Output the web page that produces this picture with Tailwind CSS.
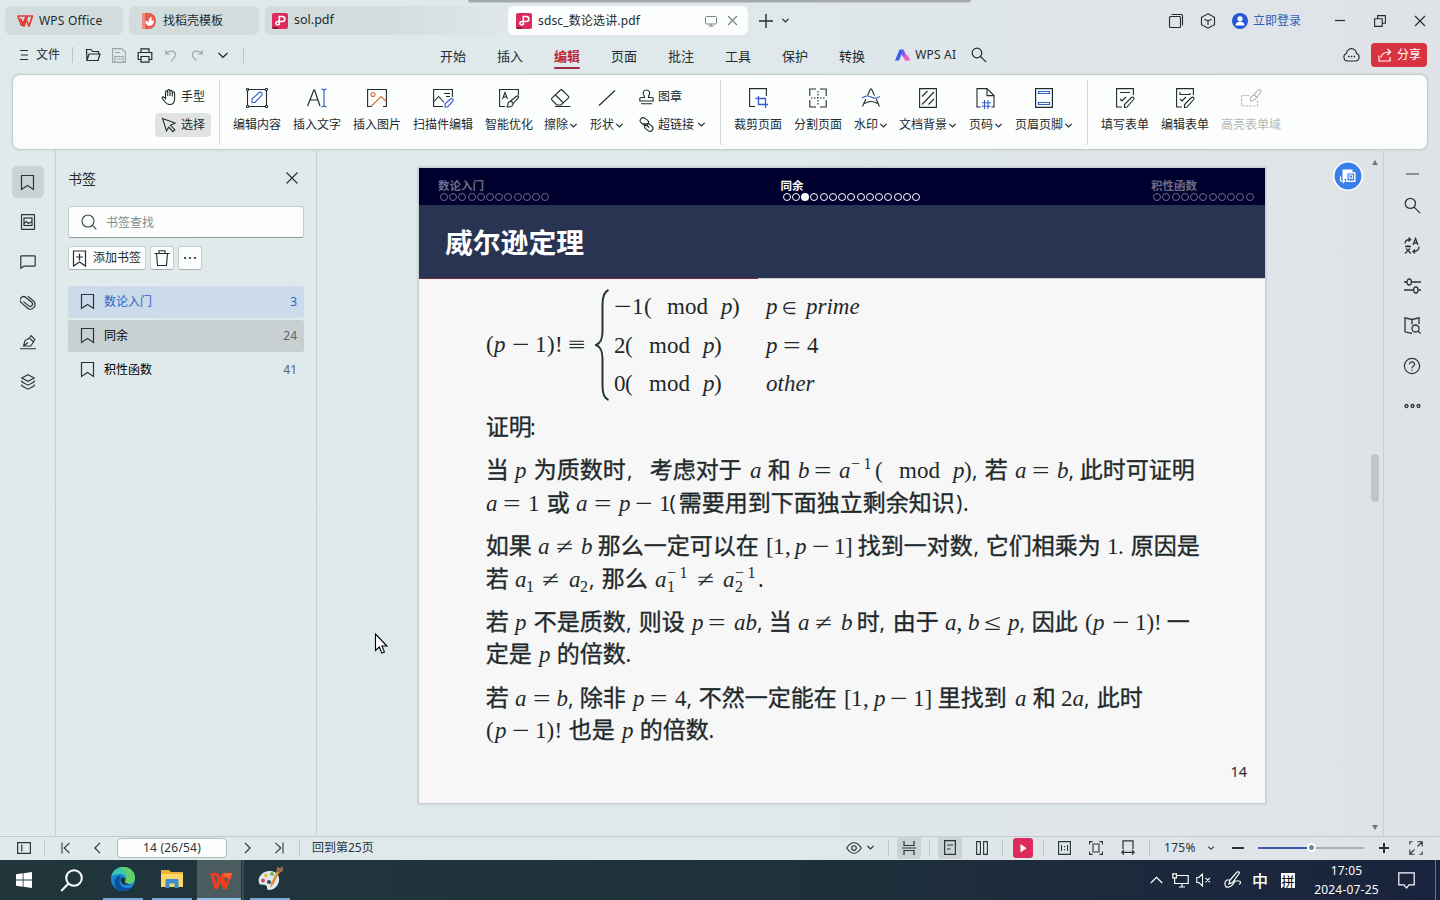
<!DOCTYPE html>
<html lang="zh-CN">
<head>
<meta charset="utf-8">
<title>sdsc_数论选讲.pdf - WPS Office</title>
<script src="https://cdn.jsdelivr.net/npm/@tailwindcss/browser@4"></script>
</head>
<body class="w-[1440px] h-[900px] overflow-hidden relative flex flex-col bg-linear-to-r from-[#dfeaeb] via-[#dfe8eb] to-[#dfe3e8] text-[12px] leading-none text-[#222b2f] font-['Noto_Sans','Noto_Sans_CJK_SC',sans-serif]">

<svg class="hidden">
  <symbol id="chev" viewBox="0 0 8 8"><path d="M1.2 2.6 4 5.3 6.8 2.6" fill="none" stroke="currentColor" stroke-width="1.100"/></symbol>
  <symbol id="mark" viewBox="0 0 16 18"><path d="M1.5 1.5h12v14L7.500 11.500 1.500 15.500z" fill="none" stroke="currentColor" stroke-width="1.2"/></symbol>
  <symbol id="pdf" viewBox="0 0 16 16"><rect width="16" height="16" rx="2" fill="#dc2c5e"/><path d="M0 14h6v2H2a2 2 0 0 1-2-2z" fill="#8e1738"/><path d="M7.300 12V3.500h3a2.500 2.500 0 0 1 0 5H5.800a1.700 1.700 0 1 0 1.500 1.700" fill="none" stroke="#fff" stroke-width="1.600"/></symbol>
  <symbol id="mag" viewBox="0 0 16 16"><g fill="none" stroke="currentColor" stroke-width="1.200"><circle cx="6" cy="6" r="4.800"/><path d="m9.500 9.500 5.700 5.700"/></g></symbol>
</svg>

<div class="absolute left-[468px] top-0 w-[503px] h-[3px] bg-[#a2a9ab] rounded-b-[3px] border-b border-[#c3c9cb]"></div>

<!-- window tabs -->
<header class="h-[41px] shrink-0 flex items-center pl-[5px] pr-[14px]">
  <div class="flex items-center w-[118px] h-[29px] rounded-[6px] bg-[#d3dcdd] pl-[12px] mr-[6px]">
    <svg class="w-[16px] h-[12px] mr-[6px]" viewBox="0 0 16 12"><path d="M0.500 1h10L7 11 3.500 3.500M5 11 8.500 3 12 11 15.500 1h-4M.7 1 4.800 11" fill="none" stroke="#e23b34" stroke-width="1.700"/></svg>
    <span class="text-[12px] tracking-[0.200px]">WPS Office</span>
  </div>
  <div class="flex items-center w-[130px] h-[29px] rounded-[6px] bg-[#d3dcdd] pl-[12px] mr-[6px]">
    <svg class="w-[16px] h-[16px] mr-[6px]" viewBox="0 0 16 16"><path d="M1 0h7a7 8 0 0 1 0 16H1z" fill="#e8584f"/><path d="M1 0h3v16H1z" fill="#ef8a80"/><path d="M8 13c-3-1-4-3-3.500-5.500C6 8 7 9 7.500 10 7.300 7 8.500 4.500 10.500 3.500c-.2 2 .2 3 .2 4.500 1-.6 1.500-.7 2.300-.6C13 10.500 11 12.800 8 13z" fill="#fff"/></svg>
    <span>找稻壳模板</span>
  </div>
  <div class="flex items-center w-[243px] h-[29px] rounded-[6px] bg-linear-to-r from-[#d3dcdd] via-[#d5dcdf] to-[#dfe7ea] pl-[7px]">
    <svg class="w-[16px] h-[16px] mr-[6px]"><use href="#pdf"/></svg>
    <span class="text-[12.500px]">sol.pdf</span>
  </div>
  <div class="flex items-center w-[240px] h-[29px] rounded-[6px] bg-[#fcfdfd] pl-[8px] pr-[10px]">
    <svg class="w-[16px] h-[16px] mr-[6px]"><use href="#pdf"/></svg>
    <span class="text-[12px] tracking-[0.150px]">sdsc_数论选讲.pdf</span>
    <svg class="ml-auto w-[12px] h-[12px] text-[#7b8386]" viewBox="0 0 12 12" fill="none" stroke="currentColor"><rect x=".5" y="1.500" width="11" height="7.500" rx="1"/><path d="M6 9v2M3.500 11h5"/></svg>
    <svg class="ml-[10px] w-[11px] h-[11px] text-[#7b8386]" viewBox="0 0 11 11" fill="none" stroke="currentColor" stroke-width="1.100"><path d="m1 1 9 9M10 1 1 10"/></svg>
  </div>
  <svg class="ml-[11px] w-[14px] h-[14px]" viewBox="0 0 14 14" stroke="currentColor" stroke-width="1.400"><path d="M7 0v14M0 7h14"/></svg>
  <svg class="ml-[8px] w-[9px] h-[9px]"><use href="#chev"/></svg>
  <svg class="ml-auto w-[16px] h-[16px]" viewBox="0 0 16 16" fill="none" stroke="currentColor" stroke-width="1.100"><rect x="1.500" y="3.500" width="11" height="11" rx="1"/><path d="M3.500 1.500h10a1 1 0 0 1 1 1v10"/></svg>
  <svg class="ml-[16px] w-[16px] h-[16px]" viewBox="0 0 16 16" fill="none" stroke="currentColor" stroke-width="1.100"><path d="M8 .8 14.500 4.300v7.400L8 15.200 1.500 11.700V4.300zM4.500 6.200 8 8l3.500-1.800M8 8v4"/></svg>
  <svg class="ml-[16px] w-[16px] h-[16px]" viewBox="0 0 16 16"><circle cx="8" cy="8" r="8" fill="#2557d6"/><circle cx="8" cy="5.800" r="2.600" fill="#fff"/><path d="M3.500 12.500a4.500 3.700 0 0 1 9 0z" fill="#fff"/></svg>
  <span class="ml-[5px] w-[49px] text-[#2f61b5]">立即登录</span>
  <svg class="ml-[32px] w-[12px] h-[12px]" viewBox="0 0 12 12" stroke="currentColor" stroke-width="1.200"><path d="M1 5.500h10"/></svg>
  <svg class="ml-[28px] w-[12px] h-[12px]" viewBox="0 0 12 12" fill="none" stroke="currentColor" stroke-width="1.100"><path d="M.6 3.800h7.600v7.600H.6zM3.600 3.500V.6h7.800v7.600H8.500"/></svg>
  <svg class="ml-[28px] w-[12px] h-[12px]" viewBox="0 0 12 12" stroke="currentColor" stroke-width="1.200"><path d="m1 1 10 10M11 1 1 11"/></svg>
</header>

<!-- menu row -->
<nav class="h-[34px] shrink-0 flex items-center pl-[19px] pr-[13px] pb-[6px]">
  <svg class="w-[10px] h-[12px]" viewBox="0 0 10 12" stroke="currentColor" stroke-width="1.100"><path d="M1 1.500h8M2 6h7M1 10.500h8"/></svg>
  <span class="ml-[7px] w-[24px]">文件</span>
  <i class="ml-[12px] w-px h-[16px] bg-[#bcc6c8]"></i>
  <svg class="ml-[12px] w-[16px] h-[14px]" viewBox="0 0 16 14" fill="none" stroke="currentColor" stroke-width="1.200"><path d="M2 12.500 1.500 1.500H6l1.500 2h6V6M2 12.500 4 6h11l-2 6.500z"/></svg>
  <svg class="ml-[11px] w-[14px] h-[15px] text-[#9ba5a8]" viewBox="0 0 14 15" fill="none" stroke="currentColor" stroke-width="1.100"><path d="M.6.6h9L13.400 4v10.400H.6zM3 4.500h5M3 14V8.500h8V14M5 11h4"/></svg>
  <svg class="ml-[11px] w-[16px] h-[15px]" viewBox="0 0 16 15" fill="none" stroke="currentColor" stroke-width="1.200"><path d="M4 4.500V.8h8v3.700M4 11.500H1.200v-7h13.600v7H12M4 8.500h8v5.700H4z"/></svg>
  <svg class="ml-[12px] w-[12px] h-[13px] text-[#9ba5a8]" viewBox="0 0 12 13" fill="none" stroke="currentColor" stroke-width="1.200"><path d="M1 1v4h4M1.300 4.700C4 .8 10.500 1.500 10.500 5.500c0 3-3 4.500-4.500 7"/></svg>
  <svg class="ml-[14px] w-[12px] h-[13px] text-[#9ba5a8]" viewBox="0 0 12 13" fill="none" stroke="currentColor" stroke-width="1.200"><path d="M11 1v4H7M10.700 4.700C8 .8 1.500 1.500 1.500 5.500c0 3 2 4.500 4 6"/></svg>
  <svg class="ml-[14px] w-[12px] h-[12px]" viewBox="0 0 12 12"><path d="M1.500 4 6 8.300 10.500 4" fill="none" stroke="currentColor" stroke-width="1.200"/></svg>
  <i class="ml-[14px] w-px h-[16px] bg-[#bcc6c8]"></i>
  <div class="ml-[196px] flex gap-[31px] text-[13px] items-center h-[26px] pt-[2px]">
    <span>开始</span><span>插入</span>
    <span class="relative font-bold text-[#bd2536]">编辑<i class="absolute left-0 top-[17px] w-[26px] h-[2px] rounded bg-[#a02c3e]"></i></span>
    <span>页面</span><span>批注</span><span>工具</span><span>保护</span><span>转换</span>
  </div>
  <svg class="ml-[30px] w-[16px] h-[12px]" viewBox="0 0 16 12"><path d="M0 11.500 4.500.5h4L4 11.500z" fill="#3c5ff0"/><path d="M8.500.5 12 8l-3 1-3-4z" fill="#8a55f0"/><path d="M9.500 6h3l3 5.500h-6z" fill="#f45fc3"/></svg>
  <span class="ml-[4px] w-[44px] text-[12px] whitespace-nowrap tracking-[0.200px]">WPS AI</span>
  <svg class="ml-[12px] w-[16px] h-[16px]"><use href="#mag"/></svg>
  <svg class="ml-auto w-[17px] h-[14px]" viewBox="0 0 17 14" fill="none" stroke="currentColor" stroke-width="1.100"><path d="M4.500 13a3.800 3.800 0 0 1-1-7.400 5 5 0 0 1 10 0 3.800 3.800 0 0 1-1 7.400z"/><path d="M5 8.500h1.500M7.800 8.500h1.500M10.600 8.500h1.500" stroke-width="1.600"/></svg>
  <div class="ml-[11px] w-[56px] h-[24px] rounded-[4px] bg-[#d93240] text-white flex items-center pl-[7px]">
    <svg class="w-[14px] h-[14px] mr-[5px]" viewBox="0 0 14 14" fill="none" stroke="currentColor" stroke-width="1.200"><path d="M1 7.500v5.500h11V9M3 9.500C3.500 6 6 4 12 4M9.500 1 12.500 4l-3 3"/></svg>分享
  </div>
</nav>

<!-- ribbon -->
<section class="mx-[13px] h-[74px] mb-px shrink-0 rounded-[7px] bg-[#fcfdfd] shadow-[0_0_2px_1px_#bcc4c6] flex items-center pb-[5px] text-[12px]">
  <div class="ml-[142px] mt-[2px] w-[56px] flex flex-col gap-[4px]">
    <div class="h-[24px] flex items-center pl-[6px]">
      <svg class="w-[16px] h-[16px] mr-[4px]" viewBox="0 0 16 16" fill="none" stroke="currentColor" stroke-width="1.100"><path d="M4.500 9.500V3a1.100 1.100 0 0 1 2.200 0V1.800a1.100 1.100 0 0 1 2.300 0V2.500a1.100 1.100 0 0 1 2.300 0V4a1.100 1.100 0 0 1 2.300 0v6c0 3.500-2 5.500-5 5.500-2.500 0-3.500-1-4.500-2.500L1.300 9.500c-.8-1.200.8-2.200 1.700-1.200zM6.700 3v4M9 2.500V7M11.300 4v3.500"/></svg>手型</div>
    <div class="h-[24px] flex items-center pl-[6px] rounded-[4px] bg-[#e1e3e3]">
      <svg class="w-[16px] h-[16px] mr-[4px]" viewBox="0 0 16 16" fill="none" stroke="currentColor" stroke-width="1.100"><path d="M1.500 1.500 14 6 9.500 8.300l4.300 4.400-1.900 1.900-4.200-4.400L5.500 14z"/></svg>选择</div>
  </div>
  <i class="ml-[8px] mr-[7px] mt-[5px] w-px h-[65px] bg-[#d5d9da]"></i>

  <div class="w-[60px] flex flex-col items-center gap-[11px] whitespace-nowrap">
    <svg class="w-[22px] h-[20px]" viewBox="0 0 22 20" fill="none" stroke="currentColor" stroke-width="1.100"><path d="M3 1.500h16M3 18.500h16M1.500 3v14M20.500 3v14"/><g fill="#fff"><circle cx="1.600" cy="1.600" r="1.100"/><circle cx="20.400" cy="1.600" r="1.100"/><circle cx="1.600" cy="18.400" r="1.100"/><circle cx="20.400" cy="18.400" r="1.100"/></g><path d="M6 14.500V11l7-6.500q1.500-1 2.700.3 1.100 1.300 0 2.700L9 14.500z" stroke="#3360c5"/></svg><span>编辑内容</span></div>
  <div class="w-[60px] flex flex-col items-center gap-[11px] whitespace-nowrap">
    <svg class="w-[20px] h-[20px]" viewBox="0 0 20 20" fill="none" stroke="currentColor" stroke-width="1.200"><path d="M.6 18 6.800 2h.8l5.400 16M2.700 12h8.300"/><path d="M14.500 1.200q2.500 0 2.500 1.500v14.500q0 1.500-2.500 1.500M19.500 1.200Q17 1.200 17 2.700v14.500q0 1.500 2.500 1.500" stroke="#3360c5"/></svg><span>插入文字</span></div>
  <div class="w-[60px] flex flex-col items-center gap-[11px] whitespace-nowrap">
    <svg class="w-[20px] h-[20px]" viewBox="0 0 20 20" fill="none" stroke="currentColor" stroke-width="1.100"><path d="M5 18.500H.6V1.500h18.800v17H16"/><g stroke="#d5703c"><circle cx="6" cy="6.500" r="2"/><path d="M4 18.500 14 8.500l5.400 5"/></g></svg><span>插入图片</span></div>
  <div class="w-[72px] flex flex-col items-center gap-[11px] whitespace-nowrap">
    <svg class="w-[22px] h-[20px]" viewBox="0 0 22 20" fill="none" stroke="currentColor" stroke-width="1.100"><path d="M11 18.500H1.600V1.500h18.800V9M12 5.500h6M14 8.500h4M1.600 14l5-5.500 5.500 6"/><path d="M13 19v-3l5.500-5q1.200-.8 2.200.2.900 1 0 2.300L15.500 19z" stroke="#3360c5"/></svg><span>扫描件编辑</span></div>
  <div class="w-[60px] flex flex-col items-center gap-[11px] whitespace-nowrap">
    <svg class="w-[22px] h-[20px]" viewBox="0 0 22 20" fill="none" stroke="currentColor" stroke-width="1.100"><path d="M7 18.500H1.600V1.500h18.800V7M4.500 11 7 4.500 9.500 11M5.300 9h3.500"/><path d="M9 18.800q1-1.300 1-2.600a2.500 2.500 0 1 1 4.300 1.500q-1.800 1.800-5.300 1.100zM12 13.500l6.500-5.300q1.500-.8 2 .3.200.8-.3 1.300L14.800 16"/></svg><span>智能优化</span></div>
  <div class="w-[44px] flex flex-col items-center gap-[11px] whitespace-nowrap">
    <svg class="w-[20px] h-[20px]" viewBox="0 0 20 20" fill="none" stroke="currentColor" stroke-width="1.100"><path d="M6 17 .9 11.900q-.8-.9 0-1.700L9.500 2q.8-.7 1.700 0l6.300 6.300q.7.800 0 1.600L10 17zM4.500 7l8 8M4 18.500h15.500" /></svg><span class="flex items-center">擦除<svg class="w-[9px] h-[9px] ml-[1px]"><use href="#chev"/></svg></span></div>
  <div class="w-[48px] flex flex-col items-center gap-[11px] whitespace-nowrap">
    <svg class="w-[18px] h-[20px]" viewBox="0 0 18 20" fill="none" stroke="currentColor" stroke-width="1.200"><path d="M1 17.500 17 2.500"/></svg><span class="flex items-center">形状<svg class="w-[9px] h-[9px] ml-[1px]"><use href="#chev"/></svg></span></div>
  <div class="ml-[8px] mt-[2px] w-[68px] flex flex-col gap-[12px] whitespace-nowrap">
    <div class="flex items-center h-[16px]"><svg class="w-[15px] h-[16px] mr-[4px]" viewBox="0 0 15 16" fill="none" stroke="currentColor" stroke-width="1.100"><path d="M5.500 8.500q.3-1.500-1-2.700a3.300 3.300 0 1 1 5.900-.1q-1.200 1.300-.9 2.800h3.700q1 0 1 1.200V12H.8V9.700q0-1.200 1-1.200zM2 14.800h11"/></svg>图章</div>
    <div class="flex items-center h-[16px]"><svg class="w-[15px] h-[16px] mr-[4px]" viewBox="0 0 15 16" fill="none" stroke="currentColor" stroke-width="1.100"><rect x=".9" y="1.600" width="9" height="6" rx="3" transform="rotate(38 5.400 4.600)"/><rect x="5.200" y="7.400" width="9" height="6" rx="3" transform="rotate(38 9.700 10.400)"/><path d="m4.500 6 5.800 4.500"/></svg>超链接<svg class="w-[9px] h-[9px] ml-[3px]"><use href="#chev"/></svg></div>
  </div>
  <i class="ml-[13px] mr-[7px] mt-[5px] w-px h-[65px] bg-[#d5d9da]"></i>

  <div class="w-[60px] flex flex-col items-center gap-[11px] whitespace-nowrap">
    <svg class="w-[20px] h-[20px]" viewBox="0 0 20 20" fill="none" stroke="currentColor" stroke-width="1.100"><path d="M7 18.500H1.600V.6h16.800V8"/><path d="M10.500 8v8.500H20M7.500 10.500h10v9.500" stroke="#3360c5" stroke-width="1.300"/></svg><span>裁剪页面</span></div>
  <div class="w-[60px] flex flex-col items-center gap-[11px] whitespace-nowrap">
    <svg class="w-[18px] h-[20px]" viewBox="0 0 18 20" fill="none" stroke="currentColor" stroke-width="1.100"><path d="M7 1H.8v7M11 1h6.200v7M7 19H.8v-7M11 19h6.200v-7"/><path d="M9 3v15M2 10h15" stroke-dasharray="1.500 1.500"/></svg><span>分割页面</span></div>
  <div class="w-[46px] flex flex-col items-center gap-[11px] whitespace-nowrap">
    <svg class="w-[20px] h-[20px]" viewBox="0 0 20 20" fill="none" stroke="currentColor" stroke-width="1.100"><path d="M6.500 7.500 9.500 1h1l3 6.500M4.800 11 1.500 18.500M15.200 11l3.300 7.500M3.500 15.500q6.500-4 13 0"/><path d="M1 10Q5.500 6.500 10 9t9-.500" stroke="#3360c5"/></svg><span class="flex items-center">水印<svg class="w-[9px] h-[9px] ml-[1px]"><use href="#chev"/></svg></span></div>
  <div class="w-[68px] flex flex-col items-center gap-[11px] whitespace-nowrap">
    <svg class="w-[18px] h-[20px]" viewBox="0 0 18 20" fill="none" stroke="currentColor" stroke-width="1.100"><path d="M.6.6h16.800v18.800H.6zM3 8.500 8.500 3M3 16.500 15 4M9.500 16.500 15 11"/></svg><span class="flex items-center">文档背景<svg class="w-[9px] h-[9px] ml-[1px]"><use href="#chev"/></svg></span></div>
  <div class="w-[48px] flex flex-col items-center gap-[11px] whitespace-nowrap">
    <svg class="w-[20px] h-[22px] -my-px" viewBox="0 0 20 22" fill="none" stroke="currentColor" stroke-width="1.100"><path d="M4.500 20H1V1.600h10l7 7V20h-2.500M11 1.600v7h7"/><path d="M8.500 13v9M12 13v9M6 15.700h9M5.500 19.300h9" stroke="#3360c5"/></svg><span class="flex items-center">页码<svg class="w-[9px] h-[9px] ml-[1px]"><use href="#chev"/></svg></span></div>
  <div class="w-[68px] flex flex-col items-center gap-[11px] whitespace-nowrap">
    <svg class="w-[18px] h-[20px]" viewBox="0 0 18 20" fill="none" stroke="currentColor" stroke-width="1.200"><path d="M.6.6h16.800v18.800H.6z"/><path d="M3.500 3.500h11v2h-11zM3.500 14.500h11v2h-11z" stroke="#3360c5"/></svg><span class="flex items-center">页眉页脚<svg class="w-[9px] h-[9px] ml-[1px]"><use href="#chev"/></svg></span></div>
  <i class="ml-[9px] mr-[7px] mt-[5px] w-px h-[65px] bg-[#d5d9da]"></i>
  <div class="w-[60px] flex flex-col items-center gap-[11px] whitespace-nowrap">
    <svg class="w-[20px] h-[20px]" viewBox="0 0 20 20" fill="none" stroke="currentColor" stroke-width="1.100"><path d="M7 19H1.600V.6h16.800V7M5 4.500h10M5 11l2 2 4-4"/><path d="M9.500 19.500v-3l7-7q1.200-.8 2.100 0 .8 1 0 2L12 19z"/></svg><span>填写表单</span></div>
  <div class="w-[60px] flex flex-col items-center gap-[11px] whitespace-nowrap">
    <svg class="w-[20px] h-[20px]" viewBox="0 0 20 20" fill="none" stroke="currentColor" stroke-width="1.100"><path d="M7 19H1.600V.6h16.800V7M5 4v2.500h10V5M5 11l2 2 4-4"/><path d="M9.500 19.500v-3l7-7q1.200-.8 2.100 0 .8 1 0 2L12 19z"/></svg><span>编辑表单</span></div>
  <div class="w-[72px] flex flex-col items-center gap-[11px] whitespace-nowrap text-[#b4b8b9]">
    <svg class="w-[22px] h-[20px]" viewBox="0 0 22 20" fill="none" stroke="currentColor" stroke-width="1.100"><path d="M9 7.500H1.500V18h16v-6" stroke-dasharray="2.500 1.200"/><path d="M10.500 13v-3.500l3.500-3L18 2q1.500-1 2.500 0t0 2.300L17 9.500l-3.500 3zM14 6.500 17 9.500"/></svg><span>高亮表单域</span></div>
</section>

<!-- body -->
<main class="flex-1 min-h-0 flex">
  <aside class="w-[56px] border-r border-[#c5d0d1] flex flex-col items-center pt-[16px] gap-[8px] text-[#2b3538]">
    <div class="size-[32px] rounded-[5px] bg-[#c9d3d4] flex items-center justify-center"><svg class="w-[16px] h-[18px] ml-px mt-px"><use href="#mark"/></svg></div>
    <div class="size-[32px] flex items-center justify-center"><svg class="w-[16px] h-[16px]" viewBox="0 0 16 16" fill="none" stroke="currentColor" stroke-width="1.200"><rect x="1.500" y=".6" width="13" height="14.800" rx=".5"/><rect x="4" y="4" width="8" height="7.500"/><path d="m4 9.500 2.500-2 2 2L12 7.500"/></svg></div>
    <div class="size-[32px] flex items-center justify-center"><svg class="w-[16px] h-[14px]" viewBox="0 0 16 14" fill="none" stroke="currentColor" stroke-width="1.200"><path d="M.8 13.200V1.600q0-.8.8-.8h12.800q.8 0 .8.800v8.800q0 .8-.8.800H4z"/></svg></div>
    <div class="size-[32px] flex items-center justify-center"><svg class="w-[16px] h-[16px]" viewBox="0 0 16 16" fill="none" stroke="currentColor" stroke-width="1.200"><g transform="rotate(-50 8 8)"><path d="M5.500 4v7a2.300 2.300 0 0 0 4.600 0V3.500a3.500 3.500 0 0 0-7 0V11.500a4.600 4.600 0 0 0 9.200 0V4"/></g></svg></div>
    <div class="size-[32px] flex items-center justify-center"><svg class="w-[16px] h-[16px]" viewBox="0 0 16 16" fill="none" stroke="currentColor" stroke-width="1.100"><path d="M0 14.700h16M3.500 12 5 6.500 9.500 4l4 4-2.800 4zM9 4.500l2-3 4 4-2 2.300M3.500 12 8 8.500"/></svg></div>
    <div class="size-[32px] flex items-center justify-center"><svg class="w-[16px] h-[16px]" viewBox="0 0 16 16" fill="none" stroke="currentColor" stroke-width="1.100"><path d="M8 .7 14.300 4 8 7.300 1.700 4zM1.700 6.500v1.300L8 11.200l6.300-3.400V6.500M1.700 10.500v1.300L8 15.200l6.300-3.400v-1.300"/></svg></div>
  </aside>

  <aside class="w-[261px] border-r border-[#c5d0d1] px-[12px] flex flex-col">
    <div class="h-[56px] flex items-center justify-between pr-[6px]"><span class="text-[14px] pt-[2px]">书签</span>
      <svg class="w-[12px] h-[12px]" viewBox="0 0 12 12" stroke="currentColor" stroke-width="1.100"><path d="m.5.5 11 11M11.500.5l-11 11"/></svg></div>
    <div class="w-[236px] h-[32px] rounded-[3px] bg-[#fcfdfd] border border-[#c3cbcd] border-b-[#8f999b] flex items-center pl-[12px] text-[#848b8d]"><svg class="w-[16px] h-[16px] mr-[9px] text-[#3b4548]" viewBox="0 0 16 16" fill="none" stroke="currentColor" stroke-width="1.100"><circle cx="7" cy="7" r="6"/><path d="m11.300 11.300 4 4"/></svg><span class="pt-px">书签查找</span></div>
    <div class="flex gap-[4px] mt-[8px]">
      <div class="w-[78px] h-[24px] rounded-[3px] bg-[#fcfdfd] border border-[#c7cfd0] border-b-[#a5adaf] flex items-center pl-[3px] whitespace-nowrap"><svg class="w-[15px] h-[17px] mr-[6px]" viewBox="0 0 15 17" fill="none" stroke="currentColor" stroke-width="1.200"><path d="M1.500 1h12v15l-6-4-6 4zM4 7h7M7.500 3.500v7"/></svg>添加书签</div>
      <div class="w-[24px] h-[24px] rounded-[3px] bg-[#fcfdfd] border border-[#c7cfd0] border-b-[#a5adaf] flex items-center justify-center"><svg class="w-[16px] h-[16px]" viewBox="0 0 16 16" fill="none" stroke="currentColor" stroke-width="1.100"><path d="M.5 3.500h15M5 3.500V.8h6v2.700M2.500 3.500l1 12h9l1-12"/></svg></div>
      <div class="w-[24px] h-[24px] rounded-[3px] bg-[#fcfdfd] border border-[#c7cfd0] border-b-[#a5adaf] flex items-center justify-center"><svg class="w-[14px] h-[4px]" viewBox="0 0 14 4" fill="currentColor"><circle cx="2" cy="2" r="1.100"/><circle cx="7" cy="2" r="1.100"/><circle cx="12" cy="2" r="1.100"/></svg></div>
    </div>
    <div class="mt-[16px] flex flex-col gap-[2px] w-[236px]">
      <div class="h-[32px] rounded-[4px] bg-[#cbdbea] flex items-center pl-[12px] pr-[7px] text-[#2f66c4]"><svg class="w-[16px] h-[18px] mr-[8px] text-[#2b3538]"><use href="#mark"/></svg>数论入门<span class="ml-auto">3</span></div>
      <div class="h-[32px] rounded-[3px] bg-[#c8d0d2] flex items-center pl-[12px] pr-[7px] text-black"><svg class="w-[16px] h-[18px] mr-[8px] text-[#2b3538]"><use href="#mark"/></svg>同余<span class="ml-auto text-[#5b6467]">24</span></div>
      <div class="h-[32px] flex items-center pl-[12px] pr-[7px] text-black"><svg class="w-[16px] h-[18px] mr-[8px] text-[#2b3538]"><use href="#mark"/></svg>积性函数<span class="ml-auto text-[#5b6467]">41</span></div>
    </div>
  </aside>

  <section class="flex-1 relative pl-[102px] pt-[18px]">
    <article class="w-[846px] h-[635px] bg-[#f7f7f7] shadow-[0_0_2px_1px_#b9c2c7] flex flex-col">
      <div class="h-[37px] bg-[#00002e] flex justify-between pl-[19px] pr-[11px] pt-[12px] text-[11.500px] font-bold font-['Noto_Sans_CJK_SC',sans-serif]">
        <div class="w-[112px] text-[#6c6c86]"><p>数论入门</p><div data-dots="12" class="flex gap-[1.200px] pl-[2px] mt-[1.500px]"></div></div>
        <div class="w-[140px] text-white"><p>同余</p><div data-dots="15" data-on="2" class="flex gap-[1.250px] pl-[2px] mt-[1.500px]"></div></div>
        <div class="w-[103px] text-[#6c6c86]"><p>积性函数</p><div data-dots="11" class="flex gap-[1.250px] pl-[2px] mt-[1.500px]"></div></div>
      </div>
      <div class="h-[73px] shrink-0 bg-[#293352] text-white text-[27.800px] font-bold font-['Noto_Sans_CJK_SC',sans-serif] pl-[26px] flex items-center">威尔逊定理</div>
      <div class="h-px bg-[#c9c9d0] shrink-0"><div class="w-[339px] h-px bg-[#7e2b3f]"></div></div>
      <div class="flex h-[116px] shrink-0 pl-[66px] pt-[8px]">
        <div class="w-[110px] pt-[42px]" data-line="eq0"></div>
        <svg class="w-[15px] h-[114px] mt-px" viewBox="0 0 15 114"><path d="M13.500 2C9 4 7.500 8 7.500 16v27c0 8-1.500 12-6.500 14 5 2 6.500 6 6.500 14v27c0 8 1.500 12 6 14" fill="none" stroke="#23373b" stroke-width="2"/></svg>
        <div class="w-[300px] flex flex-col gap-[6.500px] pl-[3px] pt-[4px]"><div data-line="eq1"></div><div data-line="eq2"></div><div data-line="eq3"></div></div>
      </div>
      <div class="pl-[66px] pt-[14px] flex flex-col gap-[11px]">
        <div data-line="t0"></div>
        <div class="flex flex-col gap-px"><div data-line="t1"></div><div data-line="t2"></div></div>
        <div class="flex flex-col gap-px"><div data-line="t3"></div><div data-line="t4"></div></div>
        <div class="flex flex-col"><div data-line="t5"></div><div data-line="t6"></div></div>
        <div class="flex flex-col pt-px"><div data-line="t7"></div><div data-line="t8"></div></div>
      </div>
      <div class="mt-auto mb-[25px] pr-[18px] text-right text-[14.500px]">14</div>
    </article>
    <svg class="absolute left-[1016px] top-[11px] w-[30px] h-[30px]" viewBox="0 0 30 30"><circle cx="15" cy="15" r="14.200" fill="#3a7fe8" stroke="#fff" stroke-width="1.500"/><path d="M9.500 8.500h10v3.500h-6v6h-4z" fill="#fff"/><rect x="13.800" y="11.800" width="8" height="8.500" fill="#3a7fe8" stroke="#fff" stroke-width="1.400"/><path d="M16.200 14v4l1.600-1.300 1.600 1.300V14z" fill="none" stroke="#fff"/><path d="M7.500 15.500v4.500h4M9.800 18l2 2-2 2" fill="none" stroke="#fff" stroke-width="1.200"/></svg>
    <i class="absolute left-[1055px] top-[10px] border-x-[3px] border-x-transparent border-b-[5px] border-b-[#6f777b]"></i>
    <i class="absolute left-[1055px] bottom-[6px] border-x-[3px] border-x-transparent border-t-[5px] border-t-[#6f777b]"></i>
    <i class="absolute left-[1054px] top-[304px] w-[8px] h-[48px] rounded-[4px] bg-[#c0c5c9]"></i>
    <svg class="absolute left-[57px] top-[483px] w-[14px] h-[22px]" viewBox="0 0 14 22"><path d="M1.500 1v16.500l3.800-3.500 2.500 6 2.600-1.100-2.500-5.900h5z" fill="#fff" stroke="#000" stroke-width="1.100"/></svg>
  </section>

  <aside class="w-[57px] border-l border-[#c8ced3] flex flex-col items-center text-[#2b3538]">
    <i class="mt-[23px] w-[13px] h-[2px] bg-[#8c9296]"></i>
    <svg class="mt-[22px] w-[17px] h-[17px]"><use href="#mag"/></svg>
    <svg class="mt-[23px] w-[16px] h-[18px]" viewBox="0 0 16 18" fill="none" stroke="currentColor" stroke-width="1.300"><path d="M1 6.500C1 3.500 3 2.500 6.500 2.500M4.500.5l2.200 2-2.200 2M9 8l2.500-6.500L14 8M9.800 6h3.500M1 9.500h6M4 8v1.500M2 11.500l5 5M6 11.500l-5 5M15 9.500c0 3.500-2 5-5.500 5M11 12.500l-2 2 2 2"/></svg>
    <svg class="mt-[23px] w-[17px] h-[16px]" viewBox="0 0 17 16" fill="none" stroke="currentColor" stroke-width="1.300"><path d="M0 4h3M7.500 4H17M0 12h9.500M14 12h3"/><ellipse cx="5.200" cy="4" rx="2.200" ry="3"/><ellipse cx="11.800" cy="12" rx="2.200" ry="3"/></svg>
    <svg class="mt-[23px] w-[17px] h-[17px]" viewBox="0 0 17 17" fill="none" stroke="currentColor" stroke-width="1.300"><path d="M8 2.500 1 .8v14L8 16.500M8 2.500l7-1.700V7M8 2.500v5"/><circle cx="11.500" cy="11.500" r="3.500"/><path d="m14 14 2.500 2.500"/></svg>
    <svg class="mt-[23px] w-[18px] h-[18px]" viewBox="0 0 18 18" fill="none" stroke="currentColor" stroke-width="1.200"><circle cx="9" cy="9" r="7.600"/><path d="M6.500 7.200a2.500 2.300 0 1 1 3.700 2Q9 9.800 9 11.200M9 12.600v1.200"/></svg>
    <svg class="mt-[28px] w-[17px] h-[6px]" viewBox="0 0 17 6" fill="none" stroke="currentColor" stroke-width="1.300"><circle cx="2.500" cy="3" r="1.500"/><circle cx="8.500" cy="3" r="1.500"/><circle cx="14.500" cy="3" r="1.500"/></svg>
  </aside>
</main>

<!-- status bar -->
<footer class="h-[24px] shrink-0 border-t border-[#c0cacb] flex items-center pb-[2px] text-[#2b3538]">
  <svg class="ml-[17px] w-[14px] h-[12px]" viewBox="0 0 14 12" fill="none" stroke="currentColor" stroke-width="1.200"><path d="M.6.6h12.800v10.800H.6zM4.800 2.500v7"/></svg>
  <i class="ml-[13px] w-px h-[14px] bg-[#bcc6c8]"></i>
  <svg class="ml-[16px] w-[9px] h-[12px]" viewBox="0 0 9 12" fill="none" stroke="currentColor" stroke-width="1.100"><path d="M1 .5v11M8.500.8 3.200 6l5.300 5.200"/></svg>
  <svg class="ml-[24px] w-[7px] h-[12px]" viewBox="0 0 7 12" fill="none" stroke="currentColor" stroke-width="1.200"><path d="M6 .8.9 6 6 11.200"/></svg>
  <div class="ml-[16px] w-[110px] h-[20px] rounded-[4px] border border-[#b3bcbe] bg-[#fcfdfd] flex items-center justify-center text-[12px] tracking-[0.200px]">14 (26/54)</div>
  <svg class="ml-[17px] w-[7px] h-[12px]" viewBox="0 0 7 12" fill="none" stroke="currentColor" stroke-width="1.200"><path d="M1 .8 6.100 6 1 11.200"/></svg>
  <svg class="ml-[24px] w-[9px] h-[12px]" viewBox="0 0 9 12" fill="none" stroke="currentColor" stroke-width="1.100"><path d="M8 .5v11M.5.800 5.800 6 .5 11.200"/></svg>
  <i class="ml-[15px] w-px h-[14px] bg-[#bcc6c8]"></i>
  <span class="ml-[12px]">回到第25页</span>

  <svg class="ml-auto w-[16px] h-[12px]" viewBox="0 0 16 12" fill="none" stroke="currentColor" stroke-width="1.100"><path d="M.8 6Q4 .8 8 .8T15.200 6Q12 11.200 8 11.200T.8 6z"/><circle cx="8" cy="6" r="2.300"/></svg>
  <svg class="ml-[4px] w-[9px] h-[9px]"><use href="#chev"/></svg>
  <i class="ml-[13px] w-px h-[16px] bg-[#bcc6c8]"></i>
  <div class="ml-[8px] w-[24px] h-[23px] rounded-[3px] bg-[#ccd3d5] flex items-center justify-center"><svg class="w-[14px] h-[14px]" viewBox="0 0 14 14" fill="none" stroke="currentColor" stroke-width="1.200"><path d="M2 0v4.500h10V0M2 14V9.500h10V14M0 7h14"/></svg></div>
  <i class="ml-[8px] w-px h-[16px] bg-[#bcc6c8]"></i>
  <div class="ml-[8px] w-[24px] h-[23px] rounded-[3px] bg-[#ccd3d5] flex items-center justify-center"><svg class="w-[12px] h-[15px]" viewBox="0 0 12 15" fill="none" stroke="currentColor" stroke-width="1.200"><path d="M.6.6h10.800v13.800H.6zM3 5h6M3 9h3.500"/></svg></div>
  <svg class="ml-[14px] w-[12px] h-[14px]" viewBox="0 0 12 14" fill="none" stroke="currentColor" stroke-width="1.100"><path d="M.6.6h3.800v12.800H.6zM7.600.6h3.800v12.800H7.600z"/></svg>
  <i class="ml-[14px] w-px h-[16px] bg-[#bcc6c8]"></i>
  <svg class="ml-[10px] w-[20px] h-[20px]" viewBox="0 0 20 20"><rect width="20" height="20" rx="3" fill="#dc2c5e"/><path d="M7.500 6v8.500l6-4.300z" fill="#fff"/></svg>
  <i class="ml-[10px] w-px h-[16px] bg-[#bcc6c8]"></i>
  <svg class="ml-[14px] w-[13px] h-[14px]" viewBox="0 0 13 14" fill="none" stroke="currentColor" stroke-width="1.100"><path d="M.6.6h11.800v12.800H.6zM3.500 4v6M9.500 4v6M6.500 5v1.200M6.500 8v1.200"/></svg>
  <svg class="ml-[18px] w-[14px] h-[14px]" viewBox="0 0 14 14" fill="none" stroke="currentColor" stroke-width="1.100"><path d="M.6 3.500V.6h3M10.500.6h2.900v2.900M.6 10.500v2.900h3M10.500 13.400h2.900v-2.900M4 3h6v8H4z"/></svg>
  <svg class="ml-[18px] w-[14px] h-[15px]" viewBox="0 0 14 15" fill="none" stroke="currentColor" stroke-width="1.200"><path d="M2 9V.8h10V9M.8 12.300h12.400M3 10 .8 12.300 3 14.600M11 10l2.200 2.300L11 14.600"/></svg>
  <i class="ml-[14px] w-px h-[16px] bg-[#bcc6c8]"></i>
  <span class="ml-[14px] w-[34px] text-[12px] tracking-[0.300px]">175%</span>
  <svg class="ml-[9px] w-[8px] h-[8px]"><use href="#chev"/></svg>
  <i class="ml-[17px] w-[12px] h-[2px] bg-current"></i>
  <div class="ml-[14px] w-[106px] h-[2px] bg-[#aab0b5] flex items-center"><i class="w-[49px] h-[2px] bg-[#3f5aa8]"></i><i class="w-[9px] h-[9px] shrink-0 rounded-full bg-[#7e8488] border-[2px] border-white"></i></div>
  <svg class="ml-[15px] w-[10px] h-[10px]" viewBox="0 0 10 10" stroke="currentColor" stroke-width="2"><path d="M0 5h10M5 0v10"/></svg>
  <svg class="ml-[20px] mr-[17px] w-[14px] h-[14px]" viewBox="0 0 14 14" fill="none" stroke="currentColor" stroke-width="1.100"><path d="M8.500.8h4.700v4.700M13 1 8.500 5.500M5.500 13.200H.8V8.500M1 13l4.500-4.500M.8 3.500V.8h2.700M13.200 10.500v2.700h-2.700"/></svg>
</footer>

<!-- taskbar -->
<footer class="h-[40px] shrink-0 bg-linear-to-r from-[#20363b] via-[#1f323b] to-[#1a233d] flex items-center text-white">
  <svg class="ml-[16px] w-[16px] h-[16px]" viewBox="0 0 16 16" fill="#fff"><path d="M0 2.200 6.700 1.300v6.200H0zM7.500 1.200 16 0v7.500H7.500zM0 8.400h6.700v6.300L0 13.800zM7.500 8.400H16V16l-8.500-1.200z"/></svg>
  <svg class="ml-[28px] w-[23px] h-[23px]" viewBox="0 0 23 23" fill="none" stroke="#fff" stroke-width="2"><circle cx="14" cy="9" r="7.800"/><path d="M8.500 14.500 1.200 22"/></svg>
  <div class="ml-[20px] w-[40px] h-[40px] border-b-2 border-[#76a9d8] flex items-center justify-center"><svg class="w-[26px] h-[26px]" viewBox="0 0 26 26"><circle cx="13" cy="13" r="12" fill="#1b86d8"/><path d="M1.200 11C2.500 4.500 7.500 1 13 1c7 0 12 5 12 10.500 0 4-3 6.300-6.500 6.300-3 0-4.200-1.300-3.400-2.500C17 12 14.500 8 10 8c-4 0-7 1-8.800 3z" fill="#3cc7b0"/><path d="M13 1c7 0 12 5 12 10.500 0 4-3 6.300-6.500 6.300-3 0-4.200-1.300-3.400-2.500C18 9 17 4 9 1.800 10 1.300 11.500 1 13 1z" fill="#62d066"/><path d="M9.500 13.500c-1 6 4 10 11.500 8.300-2 2-5 3.200-8 3.200C7.500 25 3.500 20 4.500 15c.8-3.500 4-6 7-5.500-1.300 1-1.800 2.500-2 4z" fill="#0b4f9e"/><path d="M10.500 13c-.3 4.500 4 7 9 5.300l-3.800-1.200c-1.200-.8-.9-1.600-.4-2.400.8-1.700-1-3.400-2.600-3.100-1.200.1-2 .6-2.200 1.400z" fill="#1d353b"/></svg></div>
  <div class="ml-[9px] w-[40px] h-[40px] border-b-2 border-[#76a9d8] flex items-center justify-center"><svg class="w-[22px] h-[20px]" viewBox="0 0 22 20"><path d="M0 1h8l2 2h12v15H0z" fill="#eeb23a"/><path d="M0 5h22v13H0z" fill="#fcd667"/><path d="M4.500 19v-8q0-1 1-1h11q1 0 1 1v8h-4v-4.500h-5V19z" fill="#3f8fd0"/></svg></div>
  <div class="ml-[5px] w-[44px] h-[40px] bg-[#4c5d62] border-b-2 border-[#8fc0e8] flex items-center justify-center pl-[3px] pt-[3px]"><svg class="w-[24px] h-[18px]" viewBox="0 0 24 18"><path d="M1 1h8l2 5 2-5h10.500L17.500 17h-3.300L11.500 10 8.800 17H5.500z" fill="#f23c1c"/><path d="m13 4 3-3h7.500l-2.500 6-3.500-2z" fill="#f8622a"/><path d="M4.500 3.500h2.500l1.500 5-1.200 3zM16.800 11.500 15 6h4z" fill="#4c5d62"/></svg></div>
  <i class="ml-[1px] w-[2px] h-[40px] bg-[#3a4d52]"></i>
  <div class="ml-[6px] w-[40px] h-[40px] border-b-2 border-[#76a9d8] flex items-center justify-center"><svg class="w-[26px] h-[26px]" viewBox="0 0 26 26"><path d="M2 17C0 10 7 4 14 5c6 1 9 5 8 10-1 6-6 9-10 9-3 0-1-3-3-4.500S3 20 2 17z" fill="#dfe9f2"/><circle cx="6" cy="14.500" r="2" fill="#d8484a"/><circle cx="9" cy="9.500" r="2" fill="#e9c13c"/><circle cx="15" cy="8" r="2" fill="#6fb64a"/><circle cx="12" cy="16" r="2" fill="#2d4d63"/><path d="m13 22 1-5 6-12 2.500 1.500L16.500 18z" fill="#dd9042"/><path d="m19.500 5 .5-4.500 2.500 1.500L26 .5V5l-3.500 2z" fill="#9b6a48"/></svg></div>

  <svg class="ml-auto w-[13px] h-[8px]" viewBox="0 0 13 8" fill="none" stroke="#fff" stroke-width="1.200"><path d="m.8 7 5.700-5.700L12.200 7"/></svg>
  <svg class="ml-[9px] w-[17px] h-[15px]" viewBox="0 0 17 15" fill="none" stroke="#fff" stroke-width="1.200"><path d="M4.500 2.500h11.700v8H4.500M10 10.500v3.500M7 14h6M.8.8h3.700v4H.8zM2.600 4.800v5.700h2"/></svg>
  <svg class="ml-[7px] w-[15px] h-[14px]" viewBox="0 0 15 14" fill="none" stroke="#fff" stroke-width="1.100"><path d="M.8 4.500h2L6.500 1v12L2.800 9.500h-2zM9.500 4.800l4.500 4.500M14 4.800 9.500 9.300"/></svg>
  <svg class="ml-[13px] w-[18px] h-[18px]" viewBox="0 0 18 18" fill="none" stroke="#fff" stroke-width="1.200"><path d="m5 13 1-4 7-8q2-.8 2.500 1L8.500 11.500zM6 9H3q-2.500 1-2 4.500Q1.500 17 5 16t6-6h4q1.500 0 1.500 1.500T15 13.500"/></svg>
  <span class="ml-[10px] w-[16px] text-[16px] font-medium font-['Noto_Sans_CJK_SC']">中</span>
  <span class="ml-[13px] mr-px w-[14px] h-[15px] bg-white text-black text-[13px] font-['Noto_Sans_CJK_SC'] flex items-center justify-center">拼</span>
  <div class="ml-[13px] w-[75px] text-center text-[12px] leading-[19px] whitespace-nowrap tracking-[0.200px]">17:05<br>2024-07-25</div>
  <svg class="ml-[14px] w-[17px] h-[17px]" viewBox="0 0 17 17" fill="none" stroke="#fff" stroke-width="1.200"><path d="M.8.800h15.400v12H11L8.500 16 6 12.800H.8z"/></svg>
  <i class="ml-[20px] mr-[4px] w-px h-[40px] bg-[#66738a]"></i>
</footer>

<script>
// Segment kinds: c = Chinese, q = punctuation, i = math italic, r = roman, o = operator, s = subscript, p = superscript
const KIND = {
  c: "shrink-0 text-[23px] pl-[0.7px] font-['Noto_Sans_CJK_SC',sans-serif] [-webkit-text-stroke:0.35px]",
  q: "shrink-0 text-[21px] font-['Noto_Sans',sans-serif]",
  i: "shrink-0 text-[23px] italic font-['Liberation_Serif',serif]",
  r: "shrink-0 text-[23px] font-['Liberation_Serif',serif]",
  o: "shrink-0 text-[23px] font-['Liberation_Serif',serif] origin-left scale-x-[1.35]",
  s: "shrink-0 text-[16px] leading-[14px] font-['Liberation_Serif',serif] relative top-[5px]",
  p: "shrink-0 text-[16px] leading-[14px] font-['Liberation_Serif',serif] relative -top-[9px] tracking-[3.5px]",
  e: "shrink-0 text-[17px] font-['DejaVu_Sans',sans-serif]",
};
const LINES = {
  eq0: [486, 'r(',487,'ip',495,'o−',513,'r1',536,'r)',548,'r!',556,'o≡',569],
  eq1: [613, 'o−',614,'r1',632,'r(',644,'rmod',667,'ip',721,'r)',732,'ip',766,'e∈',782,'iprime',806],
  eq2: [613, 'r2',614,'r(',625,'rmod',649,'ip',703,'r)',714,'ip',766,'o=',783,'r4',807],
  eq3: [613, 'r0',614,'r(',625,'rmod',649,'ip',703,'r)',714,'iother',766],
  t0: [486, 'c证明',486,'q:',531],
  t1: [486, 'c当',486,'ip',516,'c为质数时',534,'q,',628,'c考虑对于',650,'ia',751,'c和',768,'ib',799,'o=',815,'ia',840,'p−1',852,'r(',876,'rmod',900,'ip',954,'r)',965,'q,',973,'c若',985,'ia',1016,'o=',1033,'ib',1058,'q,',1069.5,'c此时可证明',1080],
  t2: [486, 'ia',487,'o=',504,'r1',529,'c或',547,'ia',577,'o=',595,'ip',620,'o−',636,'r1',660,'q(',670.5,'c需要用到下面独立剩余知识',679,'q)',957,'q.',964],
  t3: [486, 'c如果',486,'ia',539,'o≠',557,'ib',582,'c那么一定可以在',598,'r[',767,'r1',774,'r,',786,'ip',796,'o−',813,'r1',835,'r]',846,'c找到一对数',858,'q,',974.5,'c它们相乘为',986,'r1',1108,'r.',1119,'c原因是',1131],
  t4: [486, 'c若',486,'ia',516,'s1',527,'o≠',543,'ia',570,'s2',581,'q,',590,'c那么',602,'ia',656,'s1',668,'p−1',668,'o≠',698,'ia',724,'s2',736,'p−1',736,'q.',759],
  t5: [486, 'c若',486,'ip',516,'c不是质数',534,'q,',627,'c则设',639,'ip',693,'o=',709,'ia',735,'ib',746.5,'q,',758,'c当',769,'ia',799,'o≠',816,'ib',842,'c时',857,'q,',880.5,'c由于',893,'ia',946,'r,',957.5,'ib',969,'o≤',985,'ip',1009,'q,',1020.5,'c因此',1032,'r(',1086,'ip',1094,'o−',1113,'r1',1136,'r)',1147.5,'r!',1155,'c一',1167],
  t6: [486, 'c定是',486,'ip',540,'c的倍数',557,'q.',626.5],
  t7: [486, 'c若',486,'ia',516,'o=',534,'ib',557.5,'q,',569,'c除非',580,'ip',634,'o=',651,'r4',676,'q,',687.5,'c不然一定能在',699,'r[',845,'r1',852,'r,',864,'ip',875,'o−',891,'r1',914,'r]',925.5,'c里找到',938,'ia',1016,'c和',1033,'r2',1062,'ia',1073.5,'q,',1085,'c此时',1097],
  t8: [486, 'r(',487,'ip',496,'o−',513,'r1',536,'r)',547.5,'r!',555.5,'c也是',569,'ip',623,'c的倍数',640,'q.',709.5],
};
for (const el of document.querySelectorAll('[data-line]')) {
  const [start, ...d] = LINES[el.dataset.line];
  const row = document.createElement('div');
  row.className = 'flex items-baseline h-[32px] leading-[32px] whitespace-nowrap text-[#22292b]';
  let first = d[1] - start;
  for (let k = 0; k < d.length; k += 2) {
    const s = document.createElement('span');
    s.className = KIND[d[k][0]];
    s.textContent = d[k].slice(1);
    if (first) { s.style.marginLeft = first + 'px'; first = 0; }
    if (k + 2 < d.length) s.style.width = (d[k + 3] - d[k + 1]) + 'px';
    if (d[k][0] === 'o' && k + 2 < d.length) s.style.width = '13px', s.style.marginRight = (d[k + 3] - d[k + 1] - 13) + 'px';
    row.append(s);
  }
  el.append(row);
}
for (const el of document.querySelectorAll('[data-dots]')) {
  for (let k = 0; k < +el.dataset.dots; k++) {
    const c = document.createElement('i');
    c.className = k === +(el.dataset.on ?? -1) ? 'size-[8px] shrink-0 rounded-full bg-current' : 'size-[8px] shrink-0 rounded-full border border-current';
    el.append(c);
  }
}
</script>
</body>
</html>
